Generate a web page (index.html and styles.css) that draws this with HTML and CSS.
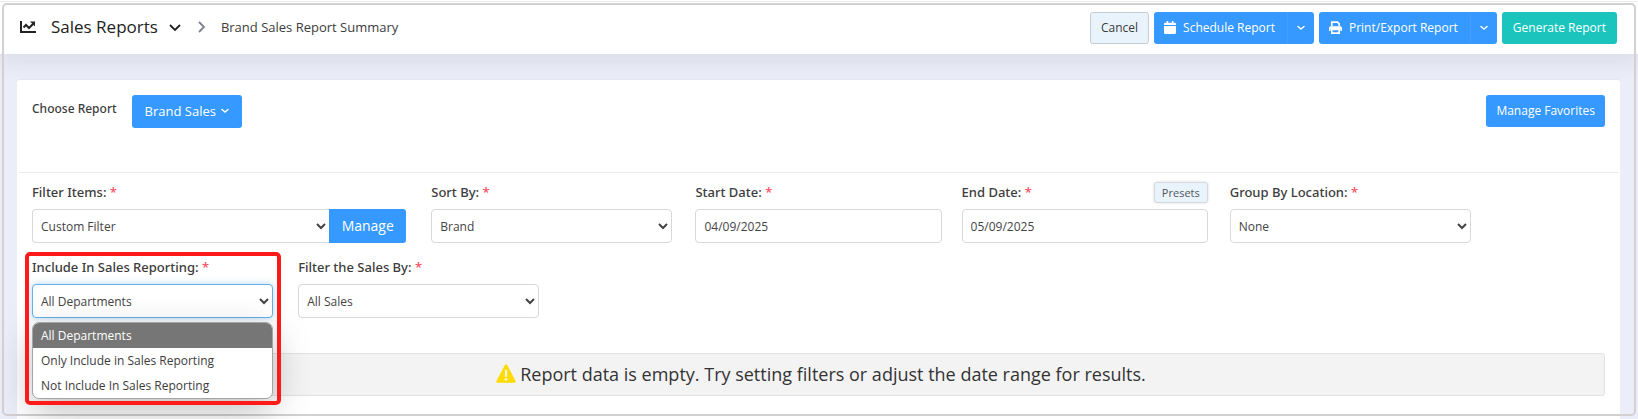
FILE: index.html
```html
<!DOCTYPE html>
<html lang="en">
<head>
<meta charset="utf-8">
<title>Brand Sales Report Summary</title>
<link rel="stylesheet" href="styles.css">
</head>
<body>
<div class="page">
  <header class="topbar">
    <nav class="crumbs">
      <svg class="icon-chart" viewBox="0 0 16 14" width="16" height="14" aria-hidden="true"><path d="M1 1v11h15" fill="none" stroke="#222" stroke-width="2"/><path d="M3.500 7.500 6 5l3 3 4-4" fill="none" stroke="#222" stroke-width="2"/><path d="M10 1.500h5v5z" fill="#222"/></svg>
      <h1 class="title">Sales Reports</h1>
      <button class="icon-btn" type="button" aria-label="Switch report"><svg viewBox="0 0 12 8" width="12" height="8"><path d="M1 1l5 5 5-5" fill="none" stroke="#222" stroke-width="1.800"/></svg></button>
      <svg class="crumb-sep" viewBox="0 0 8 12" width="8" height="12" aria-hidden="true"><path d="M1 1l5 5-5 5" fill="none" stroke="#7d7f90" stroke-width="1.800"/></svg>
      <span class="crumb">Brand Sales Report Summary</span>
    </nav>
    <div class="actions">
      <button class="btn btn-light" type="button">Cancel</button>
      <div class="split">
        <button class="btn btn-main" type="button"><svg viewBox="0 0 12 13" width="12" height="13" aria-hidden="true"><path d="M0 4V3a1.200 1.200 0 0 1 1.200-1.300H2.500V0h1.700v1.700h3.600V0h1.700v1.700h1.300A1.200 1.200 0 0 1 12 3v1zM0 5h12v6.700a1.300 1.300 0 0 1-1.300 1.300H1.300A1.300 1.300 0 0 1 0 11.700z" fill="#fff"/></svg>Schedule Report</button>
        <button class="btn btn-caret" type="button" aria-label="More schedule options"><svg viewBox="0 0 8 6" width="8" height="6"><path d="M1 1.500l3 2.500 3-2.500" fill="none" stroke="#fff" stroke-width="1.500" stroke-linecap="round"/></svg></button>
      </div>
      <div class="split">
        <button class="btn btn-main" type="button"><svg viewBox="0 0 13 13" width="13" height="13" aria-hidden="true"><path d="M2.800 5V1.200h5.700l1.700 1.700V5" fill="none" stroke="#fff" stroke-width="1.700"/><path d="M0 10V7a1.700 1.700 0 0 1 1.700-1.700h9.600A1.700 1.700 0 0 1 13 7v3h-1.500V8.500h-10V10z" fill="#fff"/><path d="M2.800 8.500h7.400v3.600H2.800z" fill="none" stroke="#fff" stroke-width="1.700"/></svg>Print/Export Report</button>
        <button class="btn btn-caret" type="button" aria-label="More export options"><svg viewBox="0 0 8 6" width="8" height="6"><path d="M1 1.500l3 2.500 3-2.500" fill="none" stroke="#fff" stroke-width="1.500" stroke-linecap="round"/></svg></button>
      </div>
      <button class="btn btn-teal" type="button">Generate Report</button>
    </div>
  </header>

  <main class="card">
    <section class="chooser">
      <span class="chooser-label">Choose Report</span>
      <button class="btn btn-report" type="button">Brand Sales<svg viewBox="0 0 8 6" width="8" height="6" aria-hidden="true"><path d="M1 1.500l3 2.500 3-2.500" fill="none" stroke="#fff" stroke-width="1.500" stroke-linecap="round"/></svg></button>
      <button class="btn btn-fav" type="button">Manage Favorites</button>
    </section>

    <form class="filters">
      <div class="field wide">
        <label for="items">Filter Items: <b>*</b></label>
        <div class="group">
          <select id="items"><option>Custom Filter</option></select>
          <button class="btn btn-manage" type="button">Manage</button>
        </div>
      </div>
      <div class="field">
        <label for="sort">Sort By: <b>*</b></label>
        <select id="sort"><option>Brand</option></select>
      </div>
      <div class="field date">
        <label for="start">Start Date: <b>*</b></label>
        <input id="start" type="text" value="04/09/2025">
      </div>
      <div class="field date">
        <div class="label-row">
          <label for="end">End Date: <b>*</b></label>
          <button class="btn btn-presets" type="button">Presets</button>
        </div>
        <input id="end" type="text" value="05/09/2025">
      </div>
      <div class="field">
        <label for="group">Group By Location: <b>*</b></label>
        <select id="group"><option>None</option></select>
      </div>
      <div class="field first">
        <label for="include">Include In Sales Reporting: <b>*</b></label>
        <div class="dropdown">
          <select id="include" class="focused"><option>All Departments</option><option>Only Include in Sales Reporting</option><option>Not Include In Sales Reporting</option></select>
          <ul class="menu">
            <li class="active">All Departments</li>
            <li>Only Include in Sales Reporting</li>
            <li>Not Include In Sales Reporting</li>
          </ul>
        </div>
        <div class="highlight"></div>
      </div>
      <div class="field">
        <label for="by">Filter the Sales By: <b>*</b></label>
        <select id="by"><option>All Sales</option></select>
      </div>
    </form>

    <div class="notice">
      <svg viewBox="0 0 20 19" width="20" height="19" aria-hidden="true"><path d="M10 1.500 18.500 17.500h-17z" fill="#ffdc00" stroke="#ffdc00" stroke-width="2.500" stroke-linejoin="round"/><path d="M10 6.500v5.500" stroke="#f3f3f3" stroke-width="2.200" stroke-linecap="round"/><circle cx="10" cy="15.300" r="1.400" fill="#f3f3f3"/></svg>
      <span>Report data is empty. Try setting filters or adjust the date range for results.</span>
    </div>
  </main>
  <div class="frame"></div>
</div>
</body>
</html>
```
FILE: styles.css
```css
* { box-sizing: border-box; }

body {
  margin: 0;
  font-family: "Open Sans", "Noto Sans", sans-serif;
  font-size: 12px;
  color: #3c3c3c;
  background: #ebeef8;
}

.page {
  position: relative;
  display: flex;
  flex-direction: column;
  min-height: 100vh;
}

.frame {
  position: absolute;
  inset: 3px 2px 3px 2px;
  border: 2px solid #d2d0d1;
  border-radius: 5px;
  pointer-events: none;
}

.topbar {
  display: flex;
  align-items: center;
  justify-content: space-between;
  height: 54px;
  padding: 2px 21px 0 20px;
  background: linear-gradient(#fff 1px, #ececec 1px, #ececec 2px, #fff 2px);
  box-shadow: 0 1px 26px 4px rgba(70, 60, 110, 0.12);
}

.crumbs { display: flex; align-items: center; padding-bottom: 2px; }
.title { margin: 0 0 0 15px; font-size: 17px; font-weight: 400; line-height: 22px; color: #222; }
.icon-btn { display: flex; margin-left: 11px; padding: 2px 0 0; border: 0; background: none; }
.crumb-sep { margin-left: 17px; }
.crumb { margin-left: 15px; font-size: 13px; }

.actions { display: flex; gap: 5px; }
.split { display: flex; }

.btn {
  display: flex;
  align-items: center;
  justify-content: center;
  height: 32px;
  padding: 0 11px 1px;
  border: 0;
  border-radius: 3px;
  background: #3699ff;
  color: #fff;
  font: 500 12px "Open Sans", "Noto Sans", sans-serif;
  white-space: nowrap;
}
.btn-light { padding: 0 10px 1px; border: 1px solid #c8cdd2; background: #e9f3fc; color: #3c3c3c; }
.btn-main { gap: 7px; padding: 0 12px 1px 10px; border-radius: 3px 0 0 3px; }
.btn-caret { width: 27px; padding: 0; border-left: 1px solid #429ffe; border-radius: 0 3px 3px 0; }
.btn-teal { background: #1bc5bd; }
.btn-report { gap: 5px; height: 33px; padding: 0 13px 2px; font-size: 13px; }
.btn-fav { margin-left: auto; padding: 0 10px 1px; }
.btn-manage { height: 34px; width: 77px; padding: 0 0 2px; border-radius: 0 3px 3px 0; font-size: 14px; }
.btn-presets {
  height: 21px;
  padding: 0 7px;
  border: 1px solid #d5dae0;
  background: #e9f3fc;
  color: #55585c;
  font-size: 11px;
  font-weight: 400;
  box-shadow: 0 0 3px rgba(0, 0, 0, 0.15);
}

.card {
  flex: 1;
  margin: 25px 18px 0 17px;
  border-top: 1px solid #e4e5ee;
  border-radius: 3px 3px 0 0;
  background: #fff;
  position: relative;
}

.chooser {
  display: flex;
  align-items: flex-start;
  height: 93px;
  margin: 0 2px;
  padding: 15px 13px 0;
  border-bottom: 1px solid #ebebeb;
}
.chooser-label { margin-right: 15px; padding-top: 5px; font-family: "Noto Sans", sans-serif; font-weight: 500; }

.filters {
  display: grid;
  grid-template-columns: repeat(12, 1fr);
  row-gap: 8px;
  margin: 0 3px;
  padding-top: 3px;
}
.field { grid-column: span 2; padding: 0 13px 0 12px; position: relative; }
.field.wide { grid-column: span 3; }
.field.date { padding: 0 10px; }
.field.first { grid-column: 1 / span 2; }

label {
  display: block;
  height: 33px;
  line-height: 32px;
  font-family: "Noto Sans", sans-serif;
  font-size: 13px;
  font-weight: 500;
}
label b { color: #f64e60; font-weight: 500; }
.label-row { display: flex; justify-content: space-between; }
.label-row .btn { margin-top: 6px; }

select, input {
  display: block;
  width: 100%;
  height: 34px;
  padding: 0 4px;
  border: 1px solid #d8d8d8;
  border-radius: 4px;
  background: #fff;
  color: #444;
  font: 12px "Open Sans", "Noto Sans", sans-serif;
}
input { padding: 0 8px; }
.group { display: flex; }
.group select { flex: 1; border-radius: 4px 0 0 4px; border-right: 0; }
.focused { border-color: #66afe9; box-shadow: 0 0 6px rgba(102, 175, 233, 0.5); }

.dropdown { position: relative; }
.menu {
  position: absolute;
  z-index: 1;
  top: 38px;
  left: 0;
  right: 0;
  margin: 0;
  padding: 0;
  overflow: hidden;
  list-style: none;
  border: 1px solid #a5a5a5;
  border-radius: 7px;
  background: #fff;
  box-shadow: 0 12px 36px rgba(0, 0, 0, 0.25);
}
.menu li { height: 25px; padding: 0 8px; line-height: 25px; }
.menu .active { background: #767676; color: #fff; }

.highlight {
  position: absolute;
  z-index: 2;
  inset: 1px 5px -87px 5px;
  border: 4px solid #ff1a1a;
  border-radius: 5px;
  pointer-events: none;
}

.notice {
  display: flex;
  align-items: center;
  justify-content: center;
  gap: 4px;
  height: 43px;
  margin: 35px 15px 0;
  padding: 0 0 2px 5px;
  border: 1px solid #e2e2e2;
  border-radius: 3px;
  background: #f3f3f3;
  color: #333;
  font-size: 18px;
}
```
